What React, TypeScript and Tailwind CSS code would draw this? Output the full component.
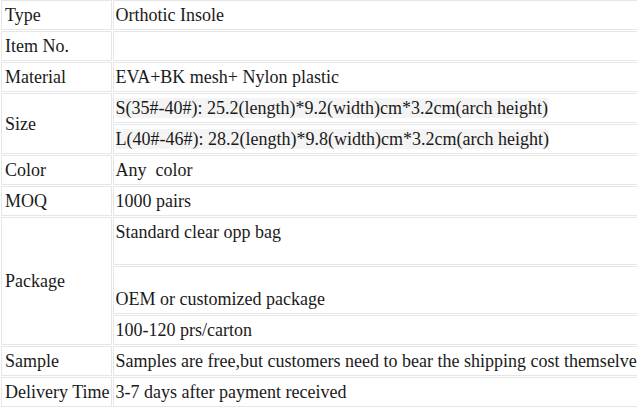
type Row = {
  label?: string;
  rowSpan?: number;
  value: React.ReactNode;
};

const rows: Row[] = [
  { label: 'Type', value: 'Orthotic Insole' },
  { label: 'Item No.', value: '' },
  { label: 'Material', value: 'EVA+BK mesh+ Nylon plastic' },
  {
    label: 'Size',
    rowSpan: 2,
    value: <span className="bg-[#f4f4f4]">S(35#-40#): 25.2(length)*9.2(width)cm*3.2cm(arch height)</span>,
  },
  { value: <span className="bg-[#f4f4f4]">L(40#-46#): 28.2(length)*9.8(width)cm*3.2cm(arch height)</span> },
  { label: 'Color', value: 'Any\u00a0 color' },
  { label: 'MOQ', value: '1000 pairs' },
  {
    label: 'Package',
    rowSpan: 3,
    value: (
      <>
        Standard clear opp bag
        <br />
        &nbsp;
      </>
    ),
  },
  {
    value: (
      <>
        &nbsp;
        <br />
        OEM or customized package
      </>
    ),
  },
  { value: '100-120 prs/carton' },
  { label: 'Sample', value: 'Samples are free,but customers need to bear the shipping cost themselves' },
  { label: 'Delivery Time', value: '3-7 days after payment received' },
];

const cell =
  'border border-[#e6e6e6] py-[5px] align-middle whitespace-nowrap [font-family:Liberation_Serif,serif] text-[18px] leading-[18px] text-[#1a1a1a]';

export default function App() {
  return (
    <div className="w-[637px] h-[409px] overflow-hidden bg-white [font-family:Liberation_Serif,serif]">
      <table className="-mt-px w-[760px] border-separate border-spacing-[1px]">
        <tbody>
          {rows.map((row, i) => (
            <tr key={i}>
              {row.label !== undefined && (
                <td rowSpan={row.rowSpan} className={`${cell} w-[110px] pl-[3px] pr-[1px]`}>
                  {row.label}
                </td>
              )}
              <td className={`${cell} pl-[2px] pr-1`}>{row.value === '' ? '\u00a0' : row.value}</td>
            </tr>
          ))}
        </tbody>
      </table>
    </div>
  );
}
